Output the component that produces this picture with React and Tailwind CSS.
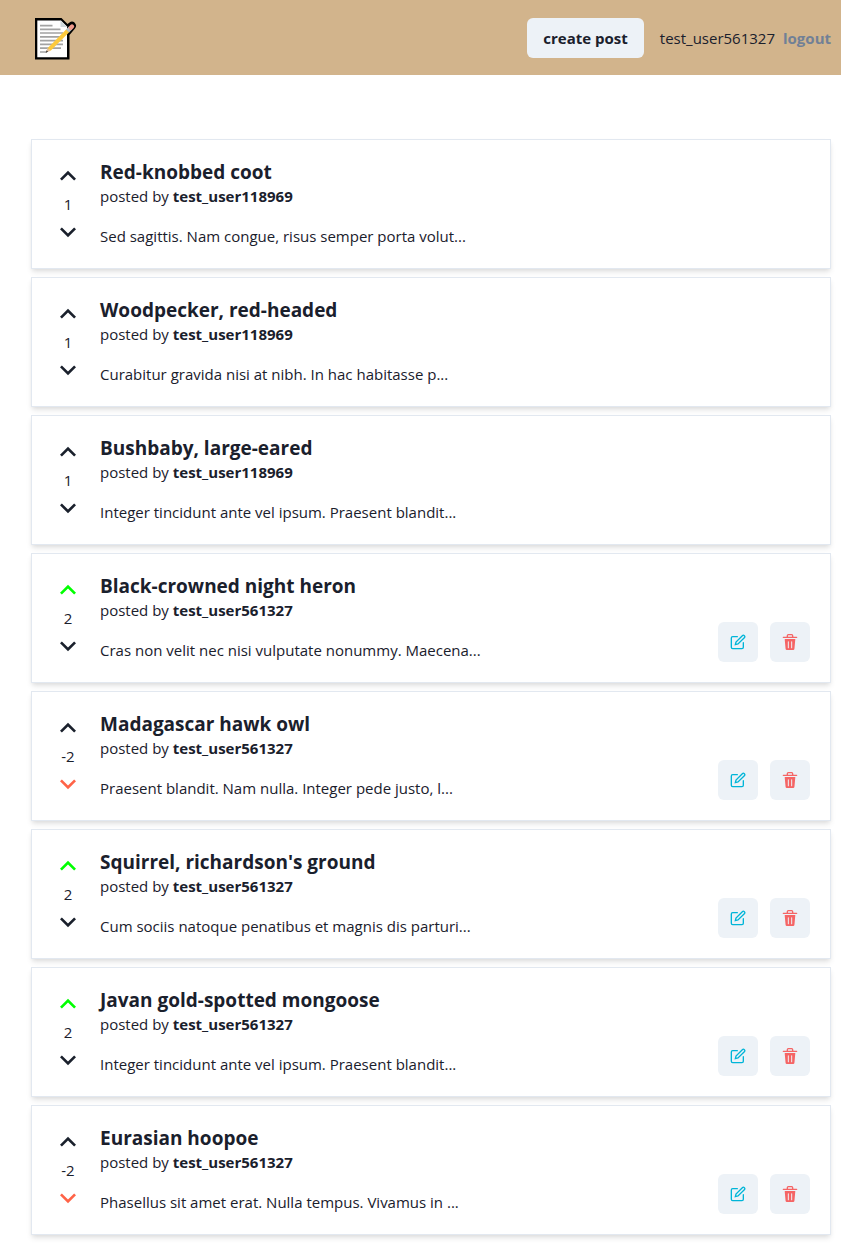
const posts = [
  { id: 1, title: "Red-knobbed coot", user: "test_user118969", text: "Sed sagittis. Nam congue, risus semper porta volut...", points: 1, vote: 0 },
  { id: 2, title: "Woodpecker, red-headed", user: "test_user118969", text: "Curabitur gravida nisi at nibh. In hac habitasse p...", points: 1, vote: 0 },
  { id: 3, title: "Bushbaby, large-eared", user: "test_user118969", text: "Integer tincidunt ante vel ipsum. Praesent blandit...", points: 1, vote: 0 },
  { id: 4, title: "Black-crowned night heron", user: "test_user561327", text: "Cras non velit nec nisi vulputate nonummy. Maecena...", points: 2, vote: 1 },
  { id: 5, title: "Madagascar hawk owl", user: "test_user561327", text: "Praesent blandit. Nam nulla. Integer pede justo, l...", points: -2, vote: -1 },
  { id: 6, title: "Squirrel, richardson's ground", user: "test_user561327", text: "Cum sociis natoque penatibus et magnis dis parturi...", points: 2, vote: 1 },
  { id: 7, title: "Javan gold-spotted mongoose", user: "test_user561327", text: "Integer tincidunt ante vel ipsum. Praesent blandit...", points: 2, vote: 1 },
  { id: 8, title: "Eurasian hoopoe", user: "test_user561327", text: "Phasellus sit amet erat. Nulla tempus. Vivamus in ...", points: -2, vote: -1 },
];

const currentUser = "test_user561327";

function Logo() {
  return (
    <svg viewBox="0 0 42 44" className="h-11 w-[42px]" aria-hidden="true">
      <path d="M0 2H26.500L32.500 8L34.500 6.500Q37 4.500 39.500 6.500Q42.500 9.500 40 12.500L34.500 19V43.500H0Z" fill="#000" />
      <path d="M2.300 4.500H26L32 10.500V41.200H2.300Z" fill="#fff" />
      <path d="M25.500 4.500L32 11H25.500Z" fill="#cfd8dc" />
      <path d="M5 9.700H17.500M5 13.300H25.500M5 17H28M5 20.800H28M5 24.600H28M5 28.400H28M5 32.200H26M5 36H12" stroke="#a3a3a3" strokeWidth="1.700" />
      <path d="M11 36.500L12.500 31.800L15.700 34.800Z" fill="#e8c39a" />
      <path d="M10.600 36.800L11.600 34.200L13.200 35.800Z" fill="#444" />
      <path d="M14.200 33.300L33 14.500" stroke="#fcc93c" strokeWidth="4" />
      <path d="M32.500 15L35.500 12" stroke="#b9c3c8" strokeWidth="4.400" />
      <path d="M35.800 11.700L37 10.500" stroke="#f09a8c" strokeWidth="4.400" strokeLinecap="round" />
    </svg>
  );
}

function ChevronUp() {
  return (
    <svg viewBox="0 0 24 24" className="size-8" fill="currentColor" aria-hidden="true">
      <path d="M12 8L6 14l1.410 1.410L12 10.830l4.590 4.580L18 14z" />
    </svg>
  );
}

function ChevronDown() {
  return (
    <svg viewBox="0 0 24 24" className="size-8" fill="currentColor" aria-hidden="true">
      <path d="M16.590 8.590L12 13.170 7.410 8.590 6 10l6 6 6-6z" />
    </svg>
  );
}

function EditIcon() {
  return (
    <svg viewBox="0 0 24 24" className="size-4" fill="none" stroke="currentColor" strokeWidth="2" strokeLinecap="round" aria-hidden="true">
      <path d="M11 4H4a2 2 0 0 0-2 2v14a2 2 0 0 0 2 2h14a2 2 0 0 0 2-2v-7" />
      <path d="M18.500 2.500a2.121 2.121 0 0 1 3 3L12 15l-4 1 1-4 9.500-9.500z" />
    </svg>
  );
}

function DeleteIcon() {
  return (
    <svg viewBox="0 0 24 24" className="size-4" fill="currentColor" aria-hidden="true">
      <path d="M19.452 7.5H4.547a.5.5 0 00-.5.545l1.287 14.136A2 2 0 007.326 24h9.347a2 2 0 001.992-1.819L19.95 8.045a.5.5 0 00-.129-.382.5.5 0 00-.369-.163zm-9.2 13a.75.75 0 01-1.5 0v-9a.75.75 0 011.5 0zm5 0a.75.75 0 01-1.5 0v-9a.75.75 0 011.5 0zM22 4h-4.750a.25.25 0 01-.25-.25V2.500A2.500 2.500 0 0014.500 0h-5A2.500 2.500 0 007 2.500v1.250a.25.25 0 01-.25.25H2a1 1 0 000 2h20a1 1 0 000-2zM9 3.750V2.500a.5.5 0 01.5-.5h5a.5.5 0 01.5.5v1.250a.25.25 0 01-.25.25h-5.500A.25.25 0 019 3.750z" />
    </svg>
  );
}

function Post({ post }) {
  return (
    <article className="flex gap-4 border border-[#e2e8f0] bg-white p-5 shadow-[0_4px_6px_-1px_rgba(0,0,0,0.1),0_2px_4px_-1px_rgba(0,0,0,0.06)]">
      <div className="flex flex-col items-center">
        <button type="button" aria-label="upvote post" className={post.vote === 1 ? "text-[#00ff00]" : ""}>
          <ChevronUp />
        </button>
        <span>{post.points}</span>
        <button type="button" aria-label="downvote post" className={post.vote === -1 ? "text-[#ff6347]" : ""}>
          <ChevronDown />
        </button>
      </div>
      <div className="min-w-0 flex-1">
        <h2 className="text-[19px] leading-6 font-bold">
          <a href="#post">{post.title}</a>
        </h2>
        <p>
          posted by <b>{post.user}</b>
        </p>
        <p className="mt-4">{post.text}</p>
      </div>
      {post.user === currentUser && (
        <div className="flex items-end gap-3">
          <button type="button" aria-label="Edit post" className="flex size-10 items-center justify-center rounded-md bg-[#edf2f7] text-[#00b5d8]">
            <EditIcon />
          </button>
          <button type="button" aria-label="Delete post" className="flex size-10 items-center justify-center rounded-md bg-[#edf2f7] text-[#f56565]">
            <DeleteIcon />
          </button>
        </div>
      )}
    </article>
  );
}

export default function App() {
  return (
    <div className="bg-white pb-2 font-['Open_Sans','Noto_Sans',sans-serif] text-[15px] leading-6 text-[#1a202c]">
      <header className="flex h-[75px] items-center bg-[#d2b48c] pr-[10px] pl-[35px]">
        <a href="#home" aria-label="Home">
          <Logo />
        </a>
        <div className="ml-auto flex items-center">
          <button type="button" className="h-10 rounded-md bg-[#edf2f7] px-4 font-bold">
            create post
          </button>
          <span className="ml-4">{currentUser}</span>
          <button type="button" className="ml-2 font-bold text-[#718096]">
            logout
          </button>
        </div>
      </header>
      <main className="mt-16 flex flex-col gap-2 pr-[10px] pl-[31px]">
        {posts.map((post) => (
          <Post key={post.id} post={post} />
        ))}
      </main>
    </div>
  );
}
